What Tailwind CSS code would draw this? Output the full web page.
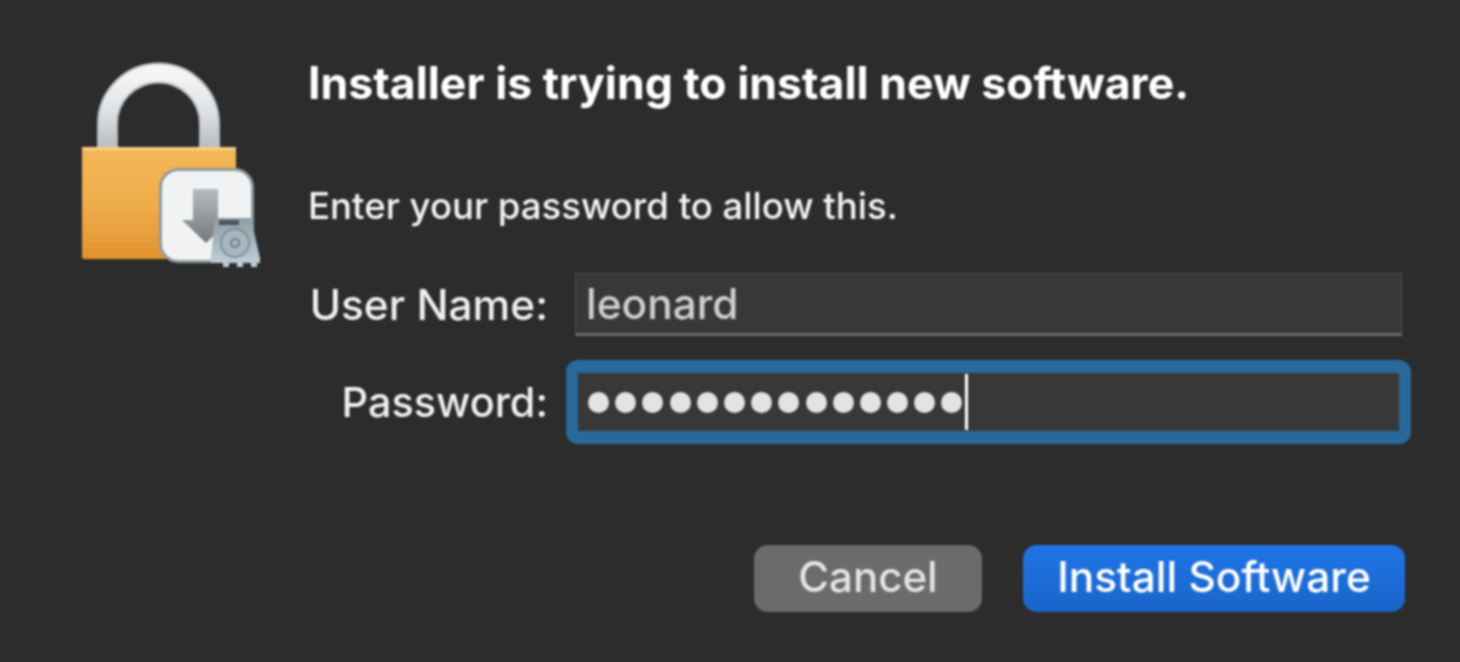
<!DOCTYPE html>
<html lang="en">
<head>
  <meta charset="UTF-8" />
  <title>Installer password prompt</title>
  <script src="https://cdn.jsdelivr.net/npm/@tailwindcss/browser@4"></script>
</head>
<body class="bg-[#2c2c2c] font-['Inter','Liberation_Sans',sans-serif] text-white overflow-hidden">
  <div class="w-[1460px] h-[662px] flex pl-[80px] pt-[62px] blur-[1px]">
    <!-- Lock icon -->
    <svg class="w-[182px] h-[206px] shrink-0" viewBox="80 62 182 206">
      <defs>
        <linearGradient id="shackle" x1="0" y1="0" x2="0" y2="1">
          <stop offset="0" stop-color="#f4f5f6" />
          <stop offset="0.5" stop-color="#dfe2e5" />
          <stop offset="1" stop-color="#b4b9be" />
        </linearGradient>
        <linearGradient id="body" x1="0" y1="0" x2="0" y2="1">
          <stop offset="0" stop-color="#f3b654" />
          <stop offset="0.5" stop-color="#f0ac48" />
          <stop offset="1" stop-color="#e0902c" />
        </linearGradient>
        <pattern id="stripes" width="4" height="6" patternUnits="userSpaceOnUse">
          <rect width="4" height="2" fill="#ffffff" opacity="0.06" />
        </pattern>
        <linearGradient id="arrow" x1="0" y1="0" x2="0" y2="1">
          <stop offset="0" stop-color="#b4bcbf" />
          <stop offset="1" stop-color="#75787a" />
        </linearGradient>
        <linearGradient id="disk" x1="0" y1="0" x2="0" y2="1">
          <stop offset="0" stop-color="#8d9da6" />
          <stop offset="1" stop-color="#c0d2da" />
        </linearGradient>
      </defs>
      <path d="M107.5 150V124a51 51 0 0 1 102 0v26" fill="none" stroke="#b9bdc1" stroke-width="21" />
      <path d="M107.5 150V124a51 51 0 0 1 102 0v26" fill="none" stroke="url(#shackle)" stroke-width="17" />
      <rect x="82" y="147" width="154" height="112" rx="2" fill="url(#body)" />
      <rect x="82" y="147" width="154" height="112" rx="2" fill="url(#stripes)" />
      <rect x="82" y="147" width="154" height="3" fill="#f8cf83" />
      <rect x="160.5" y="169.5" width="92" height="92" rx="18" fill="#f1f2f3" stroke="#8f9a9e" stroke-width="3" />
      <path d="M193 189h25v31h12l-24 23-24-23h11z" fill="url(#arrow)" />
      <path d="M215 218h36l9 40v5h-3v4h-6v-4h-8v4h-6v-4h-8v4h-6v-4h-12v-5z" fill="url(#disk)" />
      <rect x="219" y="220" width="20" height="5" fill="#4d5459" />
      <circle cx="235" cy="243" r="14" fill="#a7b7bf" stroke="#7f8e96" stroke-width="2" />
      <circle cx="235" cy="243" r="4" fill="none" stroke="#6f7d85" stroke-width="2" />
    </svg>

    <div class="ml-[46px] w-[1110px] flex flex-col">
      <h1 class="text-[44.6px] leading-[44px] font-bold mt-[-1px]">Installer is trying to install new software.</h1>
      <p class="text-[36.6px] font-medium leading-[40px] mt-[81px] text-[#f4f4f4]">Enter your password to allow this.</p>

      <form class="mt-[47px] flex flex-col">
        <div class="flex items-center">
          <label class="w-[240px] text-right text-[42.4px] font-medium leading-[63px] text-[#f0f0f0]">User Name:</label>
          <div class="ml-[27px] w-[827px] h-[63px] bg-[#383838] border border-[#505050] border-b-[3px] border-b-[#6b6b6b] pl-[10px] text-[42.4px] font-medium leading-[60px] text-[#cfcfcf]">leonard</div>
        </div>
        <div class="flex items-center mt-[24px]">
          <label class="w-[240px] text-right text-[41.4px] font-medium leading-[84px] text-[#f0f0f0]">Password:</label>
          <div class="ml-[18px] w-[845px] h-[84px] bg-[#383838] border-[12px] border-y-[13px] border-[#29699c] rounded-[12px] pl-[10px] flex items-center gap-[6.2px]">
            <span class="size-[21px] rounded-full bg-[#e3e3e3]"></span>
            <span class="size-[21px] rounded-full bg-[#e3e3e3]"></span>
            <span class="size-[21px] rounded-full bg-[#e3e3e3]"></span>
            <span class="size-[21px] rounded-full bg-[#e3e3e3]"></span>
            <span class="size-[21px] rounded-full bg-[#e3e3e3]"></span>
            <span class="size-[21px] rounded-full bg-[#e3e3e3]"></span>
            <span class="size-[21px] rounded-full bg-[#e3e3e3]"></span>
            <span class="size-[21px] rounded-full bg-[#e3e3e3]"></span>
            <span class="size-[21px] rounded-full bg-[#e3e3e3]"></span>
            <span class="size-[21px] rounded-full bg-[#e3e3e3]"></span>
            <span class="size-[21px] rounded-full bg-[#e3e3e3]"></span>
            <span class="size-[21px] rounded-full bg-[#e3e3e3]"></span>
            <span class="size-[21px] rounded-full bg-[#e3e3e3]"></span>
            <span class="size-[21px] rounded-full bg-[#e3e3e3]"></span>
            <span class="w-[3px] h-[56px] bg-white ml-[-4px]"></span>
          </div>
        </div>
        <div class="flex mt-[101px] ml-[446px] gap-[41px]">
          <button type="button" class="w-[228px] h-[67px] pb-[4px] rounded-[14px] bg-[#6b6b6b] text-[42px] font-medium text-[#e4e4e4]">Cancel</button>
          <button type="button" class="w-[382px] h-[67px] pb-[4px] rounded-[14px] bg-gradient-to-b from-[#2074e8] to-[#1a65c9] text-[42.4px] font-medium text-white">Install Software</button>
        </div>
      </form>
    </div>
  </div>
</body>
</html>
